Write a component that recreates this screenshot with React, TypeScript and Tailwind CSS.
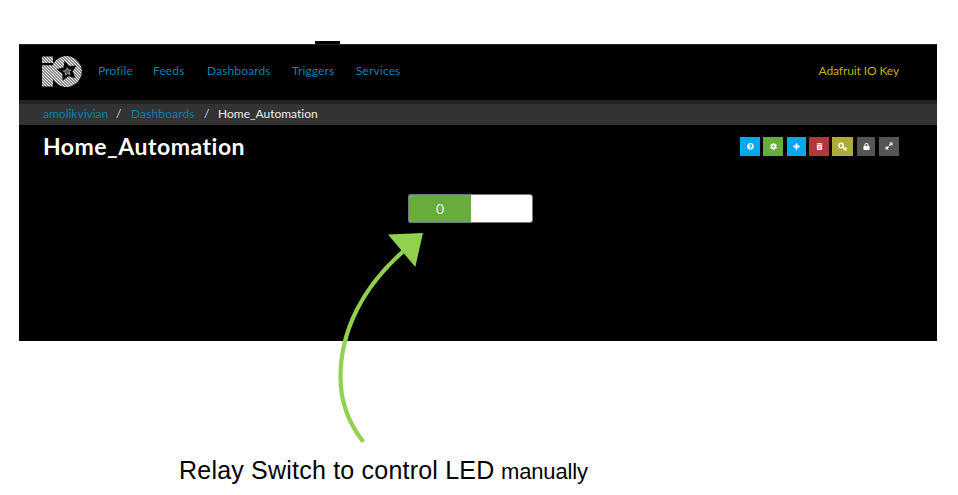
import { FaQuestionCircle, FaCog, FaPlus, FaLock, FaTrashAlt } from "react-icons/fa";

const links = [
  { label: "Profile", cls: "w-[55px]" },
  { label: "Feeds", cls: "w-[54px]" },
  { label: "Dashboards", cls: "w-[85px]" },
  { label: "Triggers", cls: "w-[64px]" },
  { label: "Services", cls: "w-[60px]" },
];

function KeyIcon({ className }: { className: string }) {
  return (
    <svg className={className} viewBox="0 0 9 9" fill="none" stroke="currentColor">
      <circle cx="3" cy="3.4" r="2.2" strokeWidth="1.4" />
      <path d="M4.6 4.9 8.5 8.5M5.6 7.5 7 6.1M7.2 5.4 8.6 6.6" strokeWidth="1.3" />
    </svg>
  );
}

function ExpandIcon({ className }: { className: string }) {
  return (
    <svg className={className} viewBox="0 0 9 9" fill="currentColor">
      <path d="M4.8.6H8.4V4.2L7.2 3 5.6 4.6 4.4 3.4 6 1.8ZM.6 8.4V4.8L1.8 6 3.4 4.4 4.6 5.6 3 7.2 4.2 8.4Z" />
    </svg>
  );
}

const tools = [
  { Icon: FaQuestionCircle, cls: "w-5 bg-[#00a9ec]", icon: "size-[7px]" },
  { Icon: FaCog, cls: "ml-[3px] w-5 bg-[#68ac3c]", icon: "size-[7px]" },
  { Icon: FaPlus, cls: "ml-[4px] w-[19px] bg-[#00a9ec]", icon: "size-[7px] stroke-white stroke-[40]" },
  { Icon: FaTrashAlt, cls: "ml-[3px] w-5 bg-[#ad3a3b]", icon: "size-[7px]" },
  { Icon: KeyIcon, cls: "ml-[3px] w-[21px] bg-[#adab3b]", icon: "size-[9px]" },
  { Icon: FaLock, cls: "ml-[4px] w-[18px] bg-[#555555]", icon: "size-[7px]" },
  { Icon: ExpandIcon, cls: "ml-[4px] w-5 bg-[#555555]", icon: "size-[8px]" },
];

function Logo() {
  return (
    <svg className="h-[31px] w-[41px] shrink-0" viewBox="0 0 41 31">
      <defs>
        <pattern id="stripes" width="2.12" height="2.12" patternUnits="userSpaceOnUse" patternTransform="rotate(-45)">
          <rect width="1.45" height="2.12" fill="#fff" />
        </pattern>
        <mask id="cut">
          <rect width="41" height="31" fill="#fff" />
          <path d="M0 7H11V9.2H0ZM22.5 5 27 10 34.5 9.5 30.6 15.4 33.6 22.2 26.6 20.2 20.6 24.6 20.4 17.6 14.4 13.2 21.6 11.6Z" fill="#000" />
        </mask>
      </defs>
      <path mask="url(#cut)" d="M0 .5H11V8A15.4 15.4 0 1 1 11 23V30.5H0Z" fill="url(#stripes)" />
      <path d="m25 11.8 1.1 2.2 2.8-.1-1.6 2.1.9 2.6-2.6-.9-2.2 1.6v-2.6l-2.1-1.7 2.6-.7Z" fill="#555" stroke="#fff" strokeWidth=".8" strokeDasharray="1.1 .8" />
    </svg>
  );
}

export default function App() {
  return (
    <div className="relative h-[495px] w-[958px] overflow-hidden bg-white pl-[19px] pt-[41px] font-['Lato',sans-serif] [font-variant-ligatures:none]">
      <div className="ml-[296px] h-[3px] w-[25px] bg-black" />
      <main className="h-[297px] w-[918px] bg-black">
        <header className="flex h-14 items-center border-t border-[#222] pl-[23px] pr-[38px]">
          <div className="pb-[3px]"><Logo /></div>
          <nav className="ml-[15px] flex pb-[4px] text-[12px] leading-4 tracking-[0.13px] text-[#087fae]">
            {links.map((l) => (
              <a key={l.label} className={l.cls}>{l.label}</a>
            ))}
          </nav>
          <a className="ml-auto pb-[3px] text-[12px] leading-4 tracking-[-0.1px] text-[#c9ad08]">Adafruit IO Key</a>
        </header>
        <div className="flex h-[25px] items-center border-t-4 border-[#222] bg-[#333] pb-[2px] pl-6 text-[12px] leading-4 text-[#087fae]">
          <a className="w-[73px]">amolikvivian</a>
          <span className="w-[15px] text-[#ddd]">/</span>
          <a className="w-[73px] tracking-[0.13px]">Dashboards</a>
          <span className="w-[14px] text-[#ddd]">/</span>
          <span className="text-[#eee]">Home_Automation</span>
        </div>
        <div className="flex h-11 items-center justify-between pb-[2px] pl-6 pr-[38px]">
          <h1 className="text-[23px] font-bold leading-7 tracking-[0.5px] text-white">Home_Automation</h1>
          <div className="flex">
            {tools.map(({ Icon, cls, icon }, i) => (
              <button key={i} className={`flex h-[19px] items-center justify-center text-white ${cls}`}>
                <Icon className={icon} />
              </button>
            ))}
          </div>
        </div>
        <div className="ml-[389px] mt-[25px] flex h-[29px] w-[125px] overflow-hidden rounded-[3px] border border-[#777] bg-white">
          <div className="flex w-[62px] items-center justify-center bg-[#68ac3c] text-[14px] text-[#e5f2dc]">0</div>
        </div>
      </main>
      <p className="ml-[160px] mt-[114px] flex items-baseline whitespace-nowrap font-['Liberation_Sans',sans-serif] leading-[30px] text-black">
        <span className="w-[322px] text-[25px] tracking-[0.21px]">Relay Switch to control LED</span>
        <span className="text-[22px] tracking-[-0.15px]">manually</span>
      </p>
      <svg className="absolute left-[330px] top-[225px] h-[225px] w-[100px]" viewBox="330 225 100 225">
        <path d="M363.3 441.7C346 420 340.5 397 340.5 377 340.5 330 363 287 403 251.5" fill="none" stroke="#92d050" strokeWidth="4.2" />
        <path d="M388 234.5 423 233 415.3 267Z" fill="#92d050" />
      </svg>
    </div>
  );
}
